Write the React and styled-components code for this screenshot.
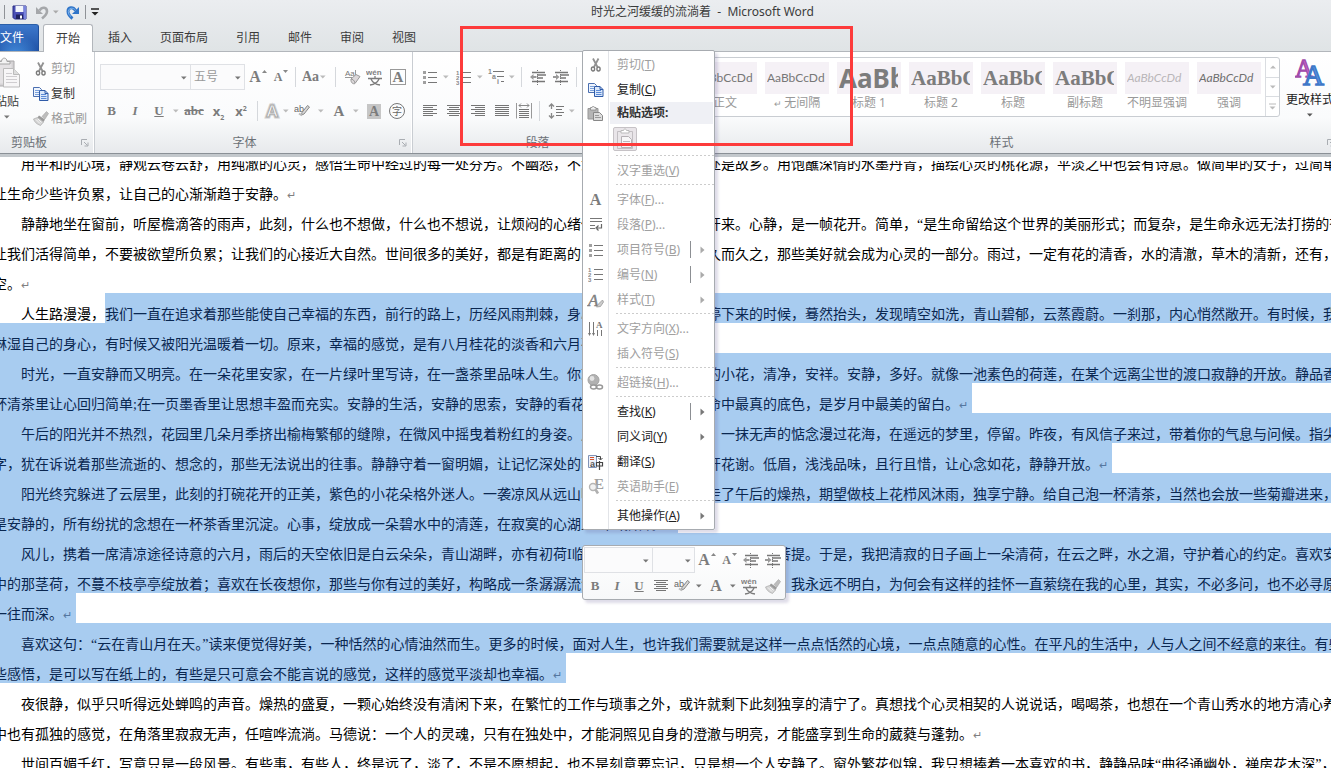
import React from "react";
import styled, { createGlobalStyle } from "styled-components";

const lines = [
  {
    indent: true,
    lead: "用平和的心境，静观云卷云舒，用纯澈的心灵，感悟生命中经过的每一处芬芳。不幽怨，不浮躁，心安处，处",
    tail: "处是故乡。用饱蘸深情的水墨丹青，描绘心灵的桃花源，平淡之中也会有诗意。做简单的女子，过简单的日子，",
  },
  { lead: "让生命少些许负累，让自己的心渐渐趋于安静。", end: true },
  {
    indent: true,
    lead: "静静地坐在窗前，听屋檐滴答的雨声，此刻，什么也不想做，什么也不想说，让烦闷的心绪伴着雨声慢慢地",
    tail: "开来。心静，是一帧花开。简单，“是生命留给这个世界的美丽形式；而复杂，是生命永远无法打捞的苍凉",
  },
  {
    lead: "让我们活得简单，不要被欲望所负累；让我们的心接近大自然。世间很多的美好，都是有距离的，只要用心久",
    tail: "久而久之，那些美好就会成为心灵的一部分。雨过，一定有花的清香，水的清澈，草木的清新，还有，天",
  },
  { lead: "空。", end: true },
  {
    indent: true,
    before: "人生路漫漫，",
    lead: "我们一直在追求着那些能使自己幸福的东西，前行的路上，历经风雨荆棘，身心疲惫，当我们",
    tail: "停下来的时候，蓦然抬头，发现晴空如洗，青山碧郁，云蒸霞蔚。一刹那，内心悄然敞开。有时候，我们",
    selected: true,
  },
  {
    lead: "淋湿自己的身心，有时候又被阳光温暖着一切。原来，幸福的感觉，是有八月桂花的淡香和六月荷的清雅。",
    selected: true,
    end: true,
  },
  {
    indent: true,
    lead: "时光，一直安静而又明亮。在一朵花里安家，在一片绿叶里写诗，在一盏茶里品味人生。你就像一朵静静",
    tail: "的小花，清净，安祥。安静，多好。就像一池素色的荷莲，在某个远离尘世的渡口寂静的开放。静品香茗",
    selected: true,
  },
  {
    lead: "杯清茶里让心回归简单;在一页墨香里让思想丰盈而充实。安静的生活，安静的思索，安静的看花开，是生",
    tail: "命中最真的底色，是岁月中最美的留白。",
    selected: true,
    end: true,
  },
  {
    indent: true,
    lead: "午后的阳光并不热烈，花园里几朵月季挤出榆梅繁郁的缝隙，在微风中摇曳着粉红的身姿。风轻轻地吹过",
    tail: "，一抹无声的惦念漫过花海，在遥远的梦里，停留。昨夜，有风信子来过，带着你的气息与问候。指尖上",
    selected: true,
  },
  {
    lead: "字，犹在诉说着那些流逝的、想念的，那些无法说出的往事。静静守着一窗明媚，让记忆深处的时光，看花",
    tail: "开花谢。低眉，浅浅品味，且行且惜，让心念如花，静静开放。",
    selected: true,
    end: true,
  },
  {
    indent: true,
    lead: "阳光终究躲进了云层里，此刻的打碗花开的正美，紫色的小花朵格外迷人。一袭凉风从远山吹来，轻轻带",
    tail: "走了午后的燥热，期望做枝上花栉风沐雨，独享宁静。给自己泡一杯清茶，当然也会放一些菊瓣进来，心",
    selected: true,
  },
  {
    lead: "是安静的，所有纷扰的念想在一杯茶香里沉淀。心事，绽放成一朵碧水中的清莲，在寂寞的心湖上幽幽飘香。",
    selected: true,
    end: true,
  },
  {
    indent: true,
    lead: "风儿，携着一席清凉途径诗意的六月，雨后的天空依旧是白云朵朵，青山湖畔，亦有初荷I临风，静静地开",
    tail: "着如佛前的菩提。于是，我把清寂的日子画上一朵清荷，在云之畔，水之湄，守护着心的约定。喜欢安静",
    selected: true,
  },
  {
    lead: "中的那茎荷，不蔓不枝亭亭绽放着；喜欢在长夜想你，那些与你有过的美好，构略成一条潺潺流淌的小河",
    tail: "静静地流淌，我永远不明白，为何会有这样的挂怀一直萦绕在我的心里，其实，不必多问，也不必寻原因",
    selected: true,
  },
  { lead: "一往而深。", selected: true, end: true },
  {
    indent: true,
    lead: "喜欢这句：“云在青山月在天。”读来便觉得好美，一种恬然的心情油然而生。更多的时候，面对人生，也许我们需要就是这样一点点恬然的心境，一点点随意的心性。在平凡的生活中，人与人之间不经意的来往。有些",
    selected: true,
  },
  {
    lead: "些感悟，是可以写在纸上的，有些是只可意会不能言说的感觉，这样的感觉平淡却也幸福。",
    selected: true,
    end: true,
  },
  {
    indent: true,
    lead: "夜很静，似乎只听得远处蝉鸣的声音。燥热的盛夏，一颗心始终没有清闲下来，在繁忙的工作与琐事之外，或许就剩下此刻独享的清宁了。真想找个心灵相契的人说说话，喝喝茶，也想在一个青山秀水的地方清心养",
  },
  {
    lead: "中也有孤独的感觉，在角落里寂寂无声，任喧哗流淌。马德说：一个人的灵魂，只有在独处中，才能洞照见自身的澄澈与明亮，才能盛享到生命的葳蕤与蓬勃。",
    end: true,
  },
  {
    indent: true,
    lead: "世间百媚千红，写意只是一段风景。有些事，有些人，终是远了，淡了，不是不愿想起，也不是刻意要忘记，只是想一个人安静了。窗外繁花似锦，我只想捧着一本喜欢的书，静静品味“曲径通幽处，禅房花木深”，但",
  },
];

const tabs = ["插入", "页面布局", "引用", "邮件", "审阅", "视图"];

const gallery = [
  { name: "正文", kind: "body" },
  { name: "无间隔", kind: "body", mark: true },
  { name: "标题 1", kind: "big" },
  { name: "标题 2", kind: "serif" },
  { name: "标题", kind: "serif" },
  { name: "副标题", kind: "serif" },
  { name: "不明显强调", kind: "faint" },
  { name: "强调", kind: "italic" },
];

const G = "#7b7b7b";

/* ---------- icons ---------- */

const Svg = ({ w = 16, h = 16, children }) => (
  <svg width={w} height={h} viewBox={`0 0 ${w} ${h}`} fill="none" aria-hidden="true">
    {children}
  </svg>
);

const Down = ({ c = "#777" }) => (
  <Svg w={6} h={4}>
    <path d="M0 0.5h5.6L2.8 3.5z" fill={c} />
  </Svg>
);

const SaveIcon = () => (
  <Svg w={15} h={15}>
    <path d="M1 1h13v13H2.5L1 12.5z" fill="#4a4fb5" stroke="#2b2f86" />
    <path d="M3.5 1h8v6h-8z" fill="#f2f5fc" />
    <path d="M11.5 1H14v13h-2z" fill="#7a84dc" />
    <path d="M4 9.5h7V14H4z" fill="#20235e" />
    <path d="M8 10.5h2v3H8z" fill="#fff" />
  </Svg>
);

const UndoIcon = () => (
  <Svg w={14} h={15}>
    <path d="M4.5 5.5C7 1.5 12 2 12 6.5c0 3-2.5 5-5 7" stroke="#a5a7aa" strokeWidth="2.6" />
    <path d="M1 2v7h7z" fill="#a5a7aa" />
  </Svg>
);

const RedoIcon = () => (
  <Svg w={14} h={15}>
    <path d="M9.5 5.5C7 1.5 2 2 2 6.5c0 3 2 5 4.5 7" stroke="#2f74c8" strokeWidth="3" />
    <path d="M9.5 5.2C7 2.2 2.6 2.6 2.3 6.5c0 2 1 4 2.7 5" stroke="#7db4ee" strokeWidth="1" />
    <path d="M13 2v7H6z" fill="#2f74c8" />
  </Svg>
);

const ScissorsIcon = () => (
  <Svg w={12} h={16}>
    <path d="M3 1.500l4.500 8.500M8.500 1.500L4 10" stroke="#929292" strokeWidth="1.800" />
    <ellipse cx="3" cy="12" rx="1.600" ry="2" stroke={G} strokeWidth="1.400" />
    <ellipse cx="8.500" cy="12" rx="1.600" ry="2" stroke={G} strokeWidth="1.400" />
  </Svg>
);

const CopyIcon = () => (
  <Svg w={16} h={14}>
    <path d="M.5 .5h6l2 2v7h-8z" fill="#eef4fd" stroke="#4a6fb0" />
    <path d="M2 3.5h4M2 5.5h4M2 7.5h4" stroke="#7ba1da" />
    <path d="M6.5 3.5H12l3 3v7H6.5z" fill="#d9e7fa" stroke="#2f5ba8" />
    <path d="M12 3.5v3h3" stroke="#2f5ba8" />
    <path d="M8 7.5h5M8 9.5h5.500M8 11.500h5.500" stroke="#5b8ad6" />
  </Svg>
);

const BrushIcon = () => (
  <Svg w={16} h={15}>
    <path d="M13.500 .5l2 2L12 8 9 5.500z" fill="#bdbdbd" stroke="#a5a5a5" strokeWidth=".6" />
    <path d="M6 4.500l6 4-1.500 2.500-6-4.500z" fill="#9b9b9b" />
    <path d="M4.500 6.500L.5 8c1 3 3 5 7 6.500l3-3.500z" fill="#d3d3d3" stroke="#aaa" strokeWidth=".7" />
    <path d="M3 8.500l4 4M5 8l3.500 3.500" stroke="#f4f4f4" />
  </Svg>
);

const PasteIcon = () => (
  <Svg w={28} h={32}>
    <path d="M1 4h20v25H1z" fill="#d5d3d5" stroke="#aaa8aa" />
    <path d="M3.5 6.5h15v20h-15z" fill="#e4e2e4" />
    <path d="M5.5 7V4.5h3C8.5 0 14 0 14 4.5h3V7z" fill="#f3f3f3" stroke="#a5a5a5" />
    <path d="M10.5 11.5h10l6 6V30h-16z" fill="#f7f6f7" stroke="#bbb" />
    <path d="M20.5 11.5v6h6" fill="#ddd" stroke="#bbb" />
    <path d="M13 16.5h6M13 19.5h11M13 22.5h11M13 25.5h11" stroke="#cfcdd0" />
  </Svg>
);

const PasteSmallIcon = () => (
  <Svg w={17} h={15}>
    <path d="M1 2.5h10V13H1z" fill="#b5b5b5" stroke="#979797" />
    <path d="M3.5 4V1.5H5C5 0 7.5 0 7.5 1.5H9V4z" fill="#eee" stroke="#888" strokeWidth=".8" />
    <path d="M6.5 6.5h6l3 3v5h-9z" fill="#ddd" stroke="#888" />
    <path d="M8 9.5h4M8 11.5h6" stroke="#999" />
  </Svg>
);

const PasteOptionIcon = () => (
  <Svg w={18} h={22}>
    <path d="M1.5 3.5h15v17h-15z" fill="#eae7ea" stroke="#c3bfc3" />
    <path d="M5 5V2.5h2.5c0-2 3-2 3 0H13V5z" fill="#fff" stroke="#bbb" />
    <path d="M5.5 8.5h7l3 3v8h-10z" fill="#f8f7f8" stroke="#b5b1b5" />
    <path d="M7 13.5h7M7 15.5h7M7 17.5h5" stroke="#bdb9bd" />
  </Svg>
);

const EraserIcon = () => (
  <Svg w={17} h={16}>
    <text x="1" y="7" fontSize="8" fontFamily="Liberation Sans" fill="#777">Aa</text>
    <path d="M11.500 1v7M1 8.500h7" stroke="#999" />
    <path d="M7 10l5-4.500 4 2-5 7c-2 1-4.500-1-4-4.500z" fill="#dcd8da" stroke="#999" />
    <path d="M7 10c1 0 3.500 1 4 4" stroke="#999" />
  </Svg>
);

const PhoneticIcon = () => (
  <Svg w={18} h={17}>
    <text x="0" y="6" fontSize="8" fontWeight="700" fontFamily="Liberation Sans" fill="#808080">wén</text>
    <path d="M9 7v2M2 9.500h14M5 10c1.500 3.500 5 5.500 9 6M13 10c-1.500 3.500-5 5.500-9 6" stroke={G} strokeWidth="1.300" />
  </Svg>
);

const HighlightIcon = () => (
  <Svg w={18} h={15}>
    <text x="0" y="8" fontSize="9" fontFamily="Liberation Sans" fill="#666">ab</text>
    <path d="M13.5 1.5l2 1.5-5.500 7-2.500 1 .5-2.500z" fill="#d8d8d8" stroke="#888" />
    <path d="M5 9.500l3 2" stroke="#bbb" strokeWidth="2" />
  </Svg>
);

const OutlineAIcon = () => (
  <Svg w={18} h={18}>
    <text x="3" y="15" fontSize="17" fontWeight="700" fontFamily="Liberation Sans" fill="#fff" stroke="#d0d0d0" strokeWidth="3">A</text>
    <text x="3" y="15" fontSize="17" fontWeight="700" fontFamily="Liberation Sans" fill="#fff" stroke="#aaa" strokeWidth="1">A</text>
  </Svg>
);

const alignments = {
  left: [[0, 14], [0, 10], [0, 14], [0, 10], [0, 14], [0, 10]],
  center: [[0, 14], [2, 12], [0, 14], [2, 12], [0, 14], [2, 12]],
  right: [[0, 14], [4, 14], [0, 14], [4, 14], [0, 14], [4, 14]],
  justify: [[0, 14], [0, 14], [0, 14], [0, 14], [0, 14], [0, 14]],
};

const AlignIcon = ({ kind }) => (
  <Svg w={14} h={12}>
    <path
      d={alignments[kind].map(([a, b], i) => `M${a} ${i * 2 + 0.5}H${b}`).join("")}
      stroke="#757575"
    />
  </Svg>
);

const DistributeIcon = () => (
  <Svg w={16} h={16}>
    <path d="M.5 0v15.500M15.500 0v15.500" stroke="#999" />
    <path d="M3 2.500h10M5 .5l-2 2 2 2M11 .5l2 2-2 2" stroke="#888" />
    <path d="M3 6.500h10M3 8.500h10M3 10.500h10M3 12.500h10M3 14.500h10" stroke="#757575" />
  </Svg>
);

const BulletsIcon = () => (
  <Svg w={14} h={14}>
    <path d="M5 2.5h9M5 7.5h9M5 12.5h9" stroke="#777" />
    <path d="M0 1h3v3H0zM0 6h3v3H0zM0 11h3v3H0z" fill="#a0a0a0" />
  </Svg>
);

const NumbersIcon = () => (
  <Svg w={15} h={15}>
    <path d="M6 2.5h9M6 7.5h9M6 12.5h9" stroke="#777" />
    <g fontSize="6" fontWeight="700" fontFamily="Liberation Sans" fill="#888">
      <text x="0" y="5">1</text>
      <text x="0" y="10">2</text>
      <text x="0" y="15">3</text>
    </g>
  </Svg>
);

const MultiIcon = () => (
  <Svg w={17} h={16}>
    <path d="M5 2.5h11M9 7.5h7M13 12.5h3" stroke="#777" />
    <g fontSize="7" fontWeight="700" fontFamily="Liberation Sans" fill="#888">
      <text x="0" y="5">1</text>
      <text x="4" y="10">a</text>
      <text x="9" y="15">i</text>
    </g>
  </Svg>
);

const IndentIcon = ({ right }) => (
  <Svg w={16} h={15}>
    <path d="M2 2.5h13M7 5h9M7 8h6M2 11.5h13" stroke="#777" strokeWidth="1.3" />
    <path d="M7.5 0v15" stroke="#777" strokeDasharray="1 1" />
    <path d={right ? "M0 6h3V4l3.500 3L3 10V8H0z" : "M6.500 6H3.500V4L0 7l3.500 3V8h3z"} fill="#999" />
  </Svg>
);

const SpacingIcon = () => (
  <Svg w={17} h={16}>
    <path d="M3.5 1v5M3.5 10v5M1 3.5L3.5 1 6 3.5M1 12.5L3.5 15 6 12.5" stroke="#888" strokeWidth="1.300" />
    <path d="M8 3.5h8M8 6.5h6M8 9.5h8M8 12.5h6" stroke="#777" />
  </Svg>
);

const ParagraphIcon = () => (
  <Svg w={14} h={15}>
    <path d="M1 1.5h12M1 4.5h12M1 8.5h5M1 11.5h5" stroke="#777" />
    <path d="M12.5 7v4H8M9.5 8.500L7 11l2.500 2.500" stroke="#666" strokeWidth="1.200" />
  </Svg>
);

const StyleIcon = () => (
  <Svg w={17} h={16}>
    <text x="1" y="14" fontSize="17" fontStyle="italic" fontFamily="Liberation Serif" fill="#808080" stroke="#808080" strokeWidth=".5">A</text>
    <path d="M15.5 8l1 2-3 4.500-4 .5 2-3z" fill="#ccc" stroke="#999" strokeWidth=".8" />
  </Svg>
);

const DirectionIcon = () => (
  <Svg w={16} h={16}>
    <path d="M1.5 1v12M5.5 1v12M9.5 9v6M13.5 9v6" stroke="#777" />
    <path d="M0 12h3l-1.500 3zM4 12h3l-1.500 3z" fill="#777" />
    <text x="8" y="7" fontSize="9" fontWeight="700" fontFamily="Liberation Serif" fill="#777">A</text>
  </Svg>
);

const LinkIcon = () => (
  <Svg w={17} h={17}>
    <circle cx="6.5" cy="6" r="5.5" fill="#b1b1b1" stroke="#a5a5a5" />
    <circle cx="5" cy="4.5" r="2.4" fill="#e3e3e3" />
    <ellipse cx="6.5" cy="13" rx="3" ry="2" stroke="#979797" strokeWidth="1.500" fill="#fff" />
    <ellipse cx="12.5" cy="13" rx="3" ry="2" stroke="#979797" strokeWidth="1.500" />
  </Svg>
);

const TranslateIcon = () => (
  <Svg w={16} h={16}>
    <path d="M.5 1.5h8v12h-8z" fill="#eef2fa" stroke="#8194b8" />
    <path d="M2 3.5h4M2 5.5h4" stroke="#d5532e" strokeWidth="1.200" />
    <text x="2" y="13" fontSize="9" fontWeight="700" fontFamily="Liberation Sans" fill="#555">a</text>
    <path d="M8 2.5h4.500v3M10.500 4l2 2 2-2" stroke="#444" />
    <path d="M8.500 8.500h6v3.500h-6zM11.500 7v9" stroke="#444" strokeWidth="1.200" />
  </Svg>
);

const HelperIcon = () => (
  <Svg w={16} h={17}>
    <text x="6" y="11" fontSize="15" fontWeight="700" fontFamily="Liberation Serif" fill="#a0a0a0">E</text>
    <circle cx="5" cy="9" r="3.500" fill="#f1f1f1" stroke="#b5b5b5" strokeWidth="1.400" />
    <path d="M7.500 11.500l2.500 4" stroke="#b0b0b0" strokeWidth="2.600" />
  </Svg>
);

const ChangeStylesIcon = () => (
  <Svg w={30} h={30}>
    <text x="0" y="20" fontSize="25" fontFamily="Liberation Serif" fill="#c565c9" stroke="#a14cab" strokeWidth="1.300">A</text>
    <text x="8" y="28" fontSize="29" fontFamily="Liberation Serif" fill="#5a93e0" stroke="#3f78c8" strokeWidth="1.500">A</text>
  </Svg>
);

const LauncherIcon = () => (
  <Svg w={8} h={8}>
    <path d="M.5 6V.5H6" stroke="#a9adb2" />
    <path d="M3 3l3.500 3.500M7 3.500V7H3.500" stroke="#a9adb2" />
  </Svg>
);

const SubArrow = ({ c }) => (
  <Svg w={5} h={8}>
    <path d="M.5 .5v7L4.500 4z" fill={c} />
  </Svg>
);

/* ---------- small parts ---------- */

const Grow = ({ small }) => (
  <>
    <Glyph $size={small ? 12 : 16}>A</Glyph>
    <Raised>
      <Svg w={5} h={3}>
        <path d={small ? "M0 0h5L2.500 3z" : "M0 3h5L2.500 0z"} fill="#888" />
      </Svg>
    </Raised>
  </>
);

const Combo = ({ label, value, width }) => (
  <ComboBox $width={width}>
    <ComboSelect aria-label={label} defaultValue={value}>
      <option value={value}>{value}</option>
    </ComboSelect>
    <ComboArrow>
      <Down />
    </ComboArrow>
  </ComboBox>
);

const Item = ({ icon, text, letter, dots, off, sub, split }) => (
  <MenuItem type="button" role="menuitem" $off={off}>
    <MenuIcon>{icon}</MenuIcon>
    <MenuText>
      {text}(<u>{letter}</u>){dots && "..."}
    </MenuText>
    {split && <MenuSplit />}
    {sub && (
      <MenuSub>
        <SubArrow c={off ? "#aaa" : "#777"} />
      </MenuSub>
    )}
  </MenuItem>
);

const Group = ({ title, width, grow, cropped, children }) => (
  <RibbonGroup $width={width} $grow={grow} $cropped={cropped}>
    <GroupBody>{children}</GroupBody>
    <GroupFoot>
      <GroupTitle>{title}</GroupTitle>
      <Launcher type="button" aria-label={title}>
        <LauncherIcon />
      </Launcher>
    </GroupFoot>
  </RibbonGroup>
);

const TextLine = ({ indent, before, lead, tail, selected, end }) => (
  <Line>
    <Lead $split={!!tail}>
      {before && <Run $indent={indent}>{before}</Run>}
      <Run $selected={selected} $indent={indent && !before} $fill={!end || !!tail}>
        {lead}
        {end && !tail && <Mark $selected={selected}>↵</Mark>}
      </Run>
    </Lead>
    {tail && (
      <Run $selected={selected} $fill={!end}>
        {tail}
        {end && <Mark $selected={selected}>↵</Mark>}
      </Run>
    )}
  </Line>
);

/* ---------- page ---------- */

const App = () => {
  return (
    <Window>
      <GlobalStyle />
      <TitleBar>
        <QuickAccess>
          <QuickSep />
          <Tool type="button" $w={28} aria-label="保存"><SaveIcon /></Tool>
          <Tool type="button" $w={18} aria-label="撤消"><UndoIcon /></Tool>
          <Tool type="button" $w={10} aria-label="撤消选项"><Down c="#aaa" /></Tool>
          <Tool type="button" $w={24} aria-label="恢复"><RedoIcon /></Tool>
          <QuickSep />
          <Tool type="button" $w={18} aria-label="自定义快速访问工具栏">
            <Svg w={8} h={8}>
              <path d="M0 1h8" stroke="#222" strokeWidth="1.500" />
              <path d="M.5 4h7L4 7.500z" fill="#222" />
            </Svg>
          </Tool>
        </QuickAccess>
        <Title>时光之河缓缓的流淌着&nbsp; -&nbsp; Microsoft Word</Title>
      </TitleBar>

      <TabBar>
        <FileTab type="button">文件</FileTab>
        <HomeTab type="button">开始</HomeTab>
        {tabs.map((t) => (
          <Tab type="button" key={t}>{t}</Tab>
        ))}
      </TabBar>

      <Ribbon>
        <Group title="剪贴板" width={113} cropped>
          <PasteButton type="button">
            <PasteIcon />
            <span>粘贴</span>
            <Down />
          </PasteButton>
          <ClipColumn>
            <ClipButton type="button" $off>
              <ClipIcon><ScissorsIcon /></ClipIcon>剪切
            </ClipButton>
            <ClipButton type="button">
              <ClipIcon><CopyIcon /></ClipIcon>复制
            </ClipButton>
            <ClipButton type="button" $off>
              <ClipIcon><BrushIcon /></ClipIcon>格式刷
            </ClipButton>
          </ClipColumn>
        </Group>

        <Group title="字体" width={318}>
          <ToolRows>
            <ToolRow>
              <Combo label="字体" value="" width={91} />
              <Combo label="字号" value="五号" width={54} />
              <Tool type="button" $w={26} aria-label="增大字体"><Grow /></Tool>
              <Tool type="button" $w={20} aria-label="缩小字体"><Grow small /></Tool>
              <Sep $w={8} />
              <Tool type="button" $w={30} aria-label="更改大小写">
                <Glyph $size={14}>Aa</Glyph>
                <Down c="#bbb" />
              </Tool>
              <Sep $w={12} />
              <Tool type="button" $w={22} aria-label="清除格式"><EraserIcon /></Tool>
              <Tool type="button" $w={24} aria-label="拼音指南"><PhoneticIcon /></Tool>
              <Tool type="button" $w={22} aria-label="字符边框"><BoxedA>A</BoxedA></Tool>
            </ToolRow>
            <ToolRow>
              <Tool type="button" $w={23} aria-label="加粗"><Glyph $size={13}>B</Glyph></Tool>
              <Tool type="button" $w={24} aria-label="倾斜"><Glyph $size={13} $italic>I</Glyph></Tool>
              <Tool type="button" $w={24} aria-label="下划线"><Glyph $size={13} $line="underline">U</Glyph></Tool>
              <Tool type="button" $w={10} aria-label="下划线类型"><Down c="#bbb" /></Tool>
              <Tool type="button" $w={26} aria-label="删除线"><Glyph $size={13} $line="line-through">abc</Glyph></Tool>
              <Tool type="button" $w={23} aria-label="下标"><Glyph $size={13} $sans>x<sub>2</sub></Glyph></Tool>
              <Tool type="button" $w={22} aria-label="上标"><Glyph $size={13} $sans>x<sup>2</sup></Glyph></Tool>
              <Sep $w={10} />
              <Tool type="button" $w={20} aria-label="文本效果"><OutlineAIcon /></Tool>
              <Tool type="button" $w={8} aria-label="文本效果选项"><Down c="#bbb" /></Tool>
              <Tool type="button" $w={26} aria-label="突出显示"><HighlightIcon /></Tool>
              <Tool type="button" $w={10} aria-label="突出显示颜色"><Down c="#bbb" /></Tool>
              <Tool type="button" $w={26} aria-label="字体颜色"><Glyph $size={15}>A</Glyph></Tool>
              <Tool type="button" $w={8} aria-label="字体颜色选项"><Down c="#bbb" /></Tool>
              <Tool type="button" $w={28} aria-label="字符底纹"><ShadedA>A</ShadedA></Tool>
              <Tool type="button" $w={18} aria-label="带圈字符"><Ringed>字</Ringed></Tool>
            </ToolRow>
          </ToolRows>
        </Group>

        <Group title="段落" width={268}>
          <ToolRows>
            <ToolRow>
              <Tool type="button" $w={24} aria-label="项目符号"><BulletsIcon /></Tool>
              <Tool type="button" $w={8} aria-label="项目符号库"><Down c="#bbb" /></Tool>
              <Tool type="button" $w={26} aria-label="编号"><NumbersIcon /></Tool>
              <Tool type="button" $w={8} aria-label="编号库"><Down c="#bbb" /></Tool>
              <Tool type="button" $w={24} aria-label="多级列表"><MultiIcon /></Tool>
              <Tool type="button" $w={8} aria-label="列表库"><Down c="#bbb" /></Tool>
              <Sep $w={10} />
              <Tool type="button" $w={24} aria-label="减少缩进量"><IndentIcon /></Tool>
              <Tool type="button" $w={22} aria-label="增加缩进量"><IndentIcon right /></Tool>
              <Sep $w={8} />
            </ToolRow>
            <ToolRow>
              <Tool type="button" $w={24} aria-label="左对齐"><AlignIcon kind="left" /></Tool>
              <Tool type="button" $w={24} aria-label="居中"><AlignIcon kind="center" /></Tool>
              <Tool type="button" $w={24} aria-label="右对齐"><AlignIcon kind="right" /></Tool>
              <Tool type="button" $w={24} aria-label="两端对齐"><AlignIcon kind="justify" /></Tool>
              <Tool type="button" $w={20} aria-label="分散对齐"><DistributeIcon /></Tool>
              <Sep $w={10} />
              <Tool type="button" $w={24} aria-label="行距"><SpacingIcon /></Tool>
              <Tool type="button" $w={8} aria-label="行距选项"><Down c="#bbb" /></Tool>
              <Sep $w={14} />
            </ToolRow>
          </ToolRows>
        </Group>

        <Group title="样式" width={660} grow>
          <Gallery>
            {gallery.map((s) => (
              <StyleCard type="button" key={s.name}>
                <Sample $kind={s.kind}>AaBbCcDd</Sample>
                <StyleName>{s.mark && <small>↵ </small>}{s.name}</StyleName>
              </StyleCard>
            ))}
            <GalleryScroll>
              <ScrollButton type="button" aria-label="上一行">
                <Svg w={6} h={4}><path d="M0 3.500h6L3 .5z" fill="#bbb" /></Svg>
              </ScrollButton>
              <ScrollButton type="button" aria-label="下一行"><Down c="#bbb" /></ScrollButton>
              <ScrollButton type="button" aria-label="其他样式">
                <Svg w={7} h={7}>
                  <path d="M0 1h7" stroke="#bbb" />
                  <path d="M.5 3.500h6L3.500 6.500z" fill="#bbb" />
                </Svg>
              </ScrollButton>
            </GalleryScroll>
          </Gallery>
          <ChangeStyles type="button">
            <ChangeStylesIcon />
            <span>更改样式</span>
            <Down c="#555" />
          </ChangeStyles>
        </Group>
      </Ribbon>

      <Paper>
        <PaperClip>
          {lines.map((l) => (
            <TextLine key={l.lead} {...l} />
          ))}
        </PaperClip>
      </Paper>

      <ContextMenu role="menu">
        <Item icon={<ScissorsIcon />} text="剪切" letter="T" off />
        <Item icon={<CopyIcon />} text="复制" letter="C" />
        <MenuHeader>
          <MenuIcon><PasteSmallIcon /></MenuIcon>
          <MenuHeading>粘贴选项:</MenuHeading>
        </MenuHeader>
        <PasteRow>
          <PasteOption type="button" aria-label="只保留文本"><PasteOptionIcon /></PasteOption>
        </PasteRow>
        <MenuRule />
        <Item text="汉字重选" letter="V" off />
        <MenuRule />
        <Item icon={<Glyph $size={16}>A</Glyph>} text="字体" letter="F" dots off />
        <Item icon={<ParagraphIcon />} text="段落" letter="P" dots off />
        <Item icon={<BulletsIcon />} text="项目符号" letter="B" off sub split />
        <Item icon={<NumbersIcon />} text="编号" letter="N" off sub split />
        <Item icon={<StyleIcon />} text="样式" letter="T" off sub />
        <MenuRule />
        <Item icon={<DirectionIcon />} text="文字方向" letter="X" dots off />
        <Item text="插入符号" letter="S" off />
        <MenuRule />
        <Item icon={<LinkIcon />} text="超链接" letter="H" dots off />
        <MenuRule />
        <Item text="查找" letter="K" sub split />
        <Item text="同义词" letter="Y" sub />
        <Item icon={<TranslateIcon />} text="翻译" letter="S" />
        <Item icon={<HelperIcon />} text="英语助手" letter="E" off />
        <MenuRule />
        <Item text="其他操作" letter="A" sub />
      </ContextMenu>

      <MiniBar>
        <MiniRow>
          <Combo label="字体" value="" width={69} />
          <Combo label="字号" value="" width={42} />
          <Tool type="button" $w={24} aria-label="增大字体"><Grow /></Tool>
          <Tool type="button" $w={21} aria-label="缩小字体"><Grow small /></Tool>
          <Tool type="button" $w={22} aria-label="减少缩进量"><IndentIcon /></Tool>
          <Tool type="button" $w={22} aria-label="增加缩进量"><IndentIcon right /></Tool>
        </MiniRow>
        <MiniRow>
          <Tool type="button" $w={22} aria-label="加粗"><Glyph $size={13}>B</Glyph></Tool>
          <Tool type="button" $w={22} aria-label="倾斜"><Glyph $size={13} $italic>I</Glyph></Tool>
          <Tool type="button" $w={22} aria-label="下划线"><Glyph $size={13} $line="underline">U</Glyph></Tool>
          <Tool type="button" $w={22} aria-label="居中"><AlignIcon kind="center" /></Tool>
          <Tool type="button" $w={22} aria-label="突出显示"><HighlightIcon /></Tool>
          <Tool type="button" $w={10} aria-label="突出显示颜色"><Down /></Tool>
          <Tool type="button" $w={24} aria-label="字体颜色"><Glyph $size={16}>A</Glyph></Tool>
          <Tool type="button" $w={10} aria-label="字体颜色选项"><Down /></Tool>
          <Tool type="button" $w={24} aria-label="拼音指南"><PhoneticIcon /></Tool>
          <Tool type="button" $w={22} aria-label="格式刷"><BrushIcon /></Tool>
        </MiniRow>
      </MiniBar>

      <RedFrame />
    </Window>
  );
};

const GlobalStyle = createGlobalStyle`
  * {
    box-sizing: border-box;
  }
  body {
    margin: 0;
    overflow: hidden;
  }
  button, select {
    margin: 0;
    padding: 0;
    border: 0;
    background: none;
    font: inherit;
    color: inherit;
  }
  svg {
    display: block;
    flex: none;
  }
`;

const Window = styled.div`
  position: relative;
  display: flex;
  flex-direction: column;
  height: 100vh;
  overflow: hidden;
  background: linear-gradient(#ebedf0, #e0e4e6 50px);
  color: #3b3b3b;
  font-family: "Noto Sans", "Noto Sans CJK SC", sans-serif;
  font-size: 12px;
  line-height: 16px;
`;

const TitleBar = styled.header`
  display: grid;
  grid-template-columns: 1fr auto 1fr;
  align-items: center;
  height: 24px;
  flex: none;
`;

const QuickAccess = styled.div`
  display: flex;
  align-items: center;
  padding-left: 4px;
`;

const QuickSep = styled.span`
  width: 1px;
  height: 14px;
  background: #8f9297;
`;

const Title = styled.div`
  grid-column: 2;
  padding-left: 74px;
  white-space: nowrap;
`;

const TabBar = styled.nav`
  display: flex;
  align-items: stretch;
  height: 28px;
  flex: none;
  border-bottom: 1px solid #b2b6bb;
`;

const Tab = styled.button`
  padding: 0 14px;
  white-space: nowrap;
`;

const FileTab = styled.button`
  width: 39px;
  margin-right: 4px;
  padding-right: 16px;
  border-top: 1px solid #2b5fa8;
  border-right: 1px solid #1f4f9c;
  border-radius: 0 3px 0 0;
  background: radial-gradient(circle at 40% 130%, #4c9ae8, transparent 60%),
    linear-gradient(#3d78cc, #1f52a6);
  color: #fff;
  white-space: nowrap;
`;

const HomeTab = styled.button`
  width: 50px;
  margin: 0 1px -1px 0;
  border: 1px solid #b2b6bb;
  border-bottom: 0;
  border-radius: 3px 3px 0 0;
  background: #fff;
`;

const Ribbon = styled.section`
  display: flex;
  height: 105px;
  flex: none;
  overflow: hidden;
  border-bottom: 3px solid #c3c8cc;
  background: linear-gradient(#fff, #fafbfc 65px, #e7e9ec 101px, #8a9096 101px);
`;

const RibbonGroup = styled.div`
  display: flex;
  flex-direction: column;
  flex: ${({ $grow, $width }) => `${$grow ? 1 : 0} 0 ${$width}px`};
  height: 101px;
  margin-left: ${({ $cropped }) => ($cropped ? -18 : 0)}px;
  border-right: 1px solid #c9cdd2;
  box-shadow: inset -1px 0 #fff;
`;

const GroupBody = styled.div`
  display: flex;
  height: 80px;
`;

const GroupFoot = styled.div`
  display: flex;
  align-items: center;
  height: 21px;
  color: #6b7076;
`;

const GroupTitle = styled.span`
  flex: 1;
  text-align: center;
`;

const Launcher = styled.button`
  display: flex;
  justify-content: center;
  width: 18px;
`;

const PasteButton = styled.button`
  display: flex;
  flex-direction: column;
  align-items: center;
  gap: 5px;
  width: 28px;
  margin-left: 11px;
  padding-top: 5px;
  white-space: nowrap;
`;

const ClipColumn = styled.div`
  display: flex;
  flex-direction: column;
  padding: 4px 0 0 9px;
`;

const ClipButton = styled.button`
  display: flex;
  align-items: center;
  height: 25px;
  color: ${({ $off }) => ($off ? "#989898" : "#333")};
  white-space: nowrap;
`;

const ClipIcon = styled.span`
  display: flex;
  justify-content: center;
  width: 21px;
`;

const ToolRows = styled.div`
  display: flex;
  flex-direction: column;
  gap: 8px;
  padding: 12px 0 0 5px;
`;

const ToolRow = styled.div`
  display: flex;
  align-items: center;
  height: 26px;
`;

const Tool = styled.button`
  display: flex;
  align-items: center;
  justify-content: center;
  gap: 1px;
  width: ${({ $w }) => $w}px;
  height: 22px;
  flex: none;
`;

const Sep = styled.span`
  display: flex;
  justify-content: center;
  width: ${({ $w }) => $w}px;
  &::before {
    content: "";
    width: 1px;
    height: 20px;
    background: #d5d8dc;
  }
`;

const Glyph = styled.span`
  color: #7c7c7c;
  font-family: ${({ $sans }) =>
    $sans ? '"Noto Sans", sans-serif' : '"Liberation Serif", serif'};
  font-size: ${({ $size }) => $size}px;
  font-style: ${({ $italic }) => ($italic ? "italic" : "normal")};
  font-weight: 700;
  line-height: 16px;
  text-decoration: ${({ $line }) => $line || "none"};
  sub, sup {
    font-size: 7px;
    line-height: 0;
  }
`;

const Raised = styled.span`
  align-self: flex-start;
  padding-top: 4px;
`;

const BoxedA = styled.span`
  width: 16px;
  height: 16px;
  border: 1px solid #999;
  color: #7c7c7c;
  font: 700 15px/14px "Liberation Serif", serif;
`;

const ShadedA = styled.span`
  width: 14px;
  height: 15px;
  background: #c6c6c6;
  color: #7c7c7c;
  font: 700 14px/15px "Liberation Serif", serif;
`;

const Ringed = styled.span`
  width: 16px;
  height: 16px;
  border: 1px solid #777;
  border-radius: 50%;
  color: #666;
  font-size: 10px;
  line-height: 14px;
`;

const ComboBox = styled.span`
  position: relative;
  display: flex;
  width: ${({ $width }) => $width}px;
  height: 26px;
  border: 1px solid #dfe1e5;
  background: #fbfbfc;
  & + & {
    border-left: 0;
  }
`;

const ComboSelect = styled.select`
  flex: 1;
  width: 100%;
  padding-left: 3px;
  appearance: none;
  color: #999;
`;

const ComboArrow = styled.span`
  position: absolute;
  top: 11px;
  right: 3px;
  pointer-events: none;
`;

const Gallery = styled.div`
  display: flex;
  height: 60px;
  margin: 5px 0 0 6px;
  padding-left: 1px;
  border: 1px solid #c9cdd2;
  border-radius: 3px;
  background: #fff;
`;

const StyleCard = styled.button`
  display: flex;
  flex-direction: column;
  width: 72px;
  padding: 4px 4px 0;
`;

const samples = {
  body: "color: #777; font: 12px/32px Lato, sans-serif;",
  big: 'color: #7c7c7c; font: 700 26px/32px "Noto Sans", sans-serif;',
  serif: 'color: #7c7c7c; font: 700 21px/32px "Liberation Serif", serif;',
  faint: "color: #b9b6b9; font: italic 12px/32px Lato, sans-serif;",
  italic: "color: #6f6f6f; font: italic 12px/32px Lato, sans-serif;",
};

const Sample = styled.span`
  width: 64px;
  height: 32px;
  padding: 0 3px 0 2px;
  overflow: clip;
  overflow-clip-margin: content-box;
  background: #f5f1f6;
  text-align: left;
  ${({ $kind }) => samples[$kind]}
`;

const StyleName = styled.span`
  align-self: center;
  color: #999;
  line-height: 17px;
  white-space: nowrap;
  small {
    font-size: 9px;
  }
`;

const GalleryScroll = styled.div`
  display: flex;
  flex-direction: column;
  width: 14px;
  border-left: 1px solid #dadde1;
`;

const ScrollButton = styled.button`
  display: flex;
  align-items: center;
  justify-content: center;
  flex: 1;
  & + & {
    border-top: 1px solid #dadde1;
  }
`;

const ChangeStyles = styled.button`
  display: flex;
  flex-direction: column;
  align-items: center;
  gap: 5px;
  width: 60px;
  padding-top: 5px;
  color: #222;
  white-space: nowrap;
`;

const Paper = styled.main`
  flex: 1;
  min-height: 0;
  padding-top: 4px;
  background: #fff;
`;

const PaperClip = styled.div`
  height: 100%;
  overflow: hidden;
  color: #000;
  font-family: "Liberation Serif", "Noto Sans CJK SC", sans-serif;
  font-size: 14px;
  line-height: 17px;
  & > :first-child {
    margin-top: -18px;
  }
`;

const Line = styled.div`
  display: flex;
  height: 30px;
  margin-left: -7px;
  overflow: hidden;
  white-space: pre;
`;

const Lead = styled.div`
  display: flex;
  flex: ${({ $split }) => ($split ? "0 0 714px" : "1 0 auto")};
  overflow: hidden;
`;

const Run = styled.span`
  flex: ${({ $fill }) => ($fill ? "1 0 auto" : "none")};
  padding-top: 13px;
  padding-left: ${({ $indent }) => ($indent ? 28 : 0)}px;
  background: ${({ $selected }) => ($selected ? "#a8ccf0" : "none")};
  color: ${({ $selected }) => ($selected ? "#0a2750" : "#000")};
`;

const Mark = styled.span`
  display: inline-block;
  width: 13px;
  color: ${({ $selected }) => ($selected ? "#54779f" : "#808080")};
  font-size: 11px;
`;

const ContextMenu = styled.div`
  position: absolute;
  top: 50px;
  left: 582px;
  width: 133px;
  padding: 1px 0;
  border: 1px solid #a7abb0;
  border-radius: 2px;
  background: linear-gradient(90deg, #fff 25px, #e2e4e8 25px, #e2e4e8 26px, #fff 26px);
  box-shadow: 3px 3px 3px rgba(90, 80, 140, 0.2);
`;

const MenuItem = styled.button`
  display: flex;
  align-items: center;
  width: 100%;
  height: 25px;
  color: ${({ $off }) => ($off ? "#a0a0a0" : "#222")};
  white-space: nowrap;
`;

const MenuIcon = styled.span`
  display: flex;
  align-items: center;
  justify-content: center;
  width: 25px;
  flex: none;
`;

const MenuText = styled.span`
  flex: 1;
  padding-left: 9px;
  text-align: left;
`;

const MenuSplit = styled.span`
  width: 1px;
  height: 17px;
  margin-right: 9px;
  background: #8c8f93;
`;

const MenuSub = styled.span`
  width: 14px;
`;

const MenuHeader = styled.div`
  display: flex;
  align-items: center;
  height: 22px;
`;

const MenuHeading = styled.span`
  flex: 1;
  margin: 0 1px 0 2px;
  padding-left: 7px;
  background: #eff0f5;
  color: #333;
  font-weight: 700;
  line-height: 22px;
`;

const PasteRow = styled.div`
  display: flex;
  align-items: center;
  height: 30px;
  padding-left: 30px;
`;

const PasteOption = styled.button`
  display: flex;
  align-items: center;
  justify-content: center;
  width: 24px;
  height: 24px;
  border: 1px solid #c6c2c6;
  border-radius: 2px;
  background: #e9e5e9;
`;

const MenuRule = styled.div`
  height: 4px;
  margin-left: 33px;
  background: repeating-linear-gradient(90deg, #ccc 0 2px, transparent 2px 4px) 0 1px / 100% 1px
    no-repeat;
`;

const MiniBar = styled.div`
  position: absolute;
  top: 545px;
  left: 582px;
  width: 204px;
  padding: 1px 0 0 1px;
  border: 1px solid #a7abb0;
  border-radius: 3px;
  background: linear-gradient(#fff, #f7f8f9);
  box-shadow: 3px 3px 3px rgba(90, 80, 140, 0.2);
`;

const MiniRow = styled.div`
  display: flex;
  align-items: center;
  height: 26px;
`;

const RedFrame = styled.div`
  position: absolute;
  top: 26px;
  left: 460px;
  width: 393px;
  height: 120px;
  border: 3px solid #fd3b3b;
  pointer-events: none;
`;

export default App;
